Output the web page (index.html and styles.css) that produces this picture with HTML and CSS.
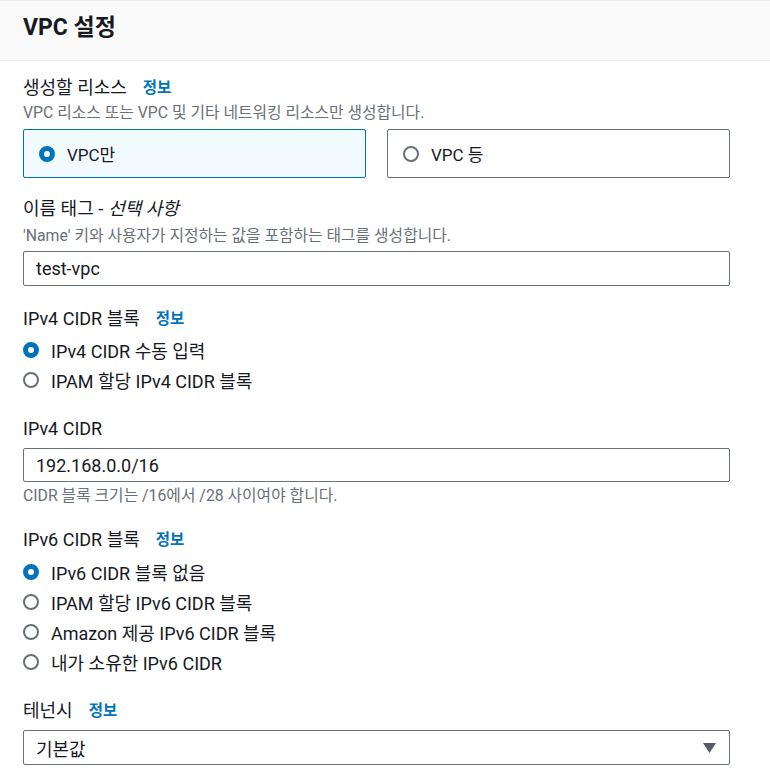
FILE: index.html
```html
<!DOCTYPE html>
<html lang="ko">
<head>
<meta charset="utf-8">
<title>VPC 설정</title>
<link rel="stylesheet" href="styles.css">
</head>
<body>
<section class="panel">
  <header class="panel-header">
    <h2 class="panel-title">VPC 설정</h2>
  </header>
  <div class="panel-body">
    <div class="field field-resources">
      <div class="label">생성할 리소스 <a class="info" href="#">정보</a></div>
      <div class="desc">VPC 리소스 또는 VPC 및 기타 네트워킹 리소스만 생성합니다.</div>
      <div class="tiles">
        <div class="tile tile-selected"><span class="radio radio-on"></span><span class="tile-text">VPC만</span></div>
        <div class="tile"><span class="radio"></span><span class="tile-text">VPC 등</span></div>
      </div>
    </div>

    <div class="field field-name">
      <div class="label">이름 태그 - <em>선택 사항</em></div>
      <div class="desc">'Name' 키와 사용자가 지정하는 값을 포함하는 태그를 생성합니다.</div>
      <div class="input">test-vpc</div>
    </div>

    <div class="field field-ipv4">
      <div class="label">IPv4 CIDR 블록 <a class="info" href="#">정보</a></div>
      <div class="radios">
        <div class="radio-row"><span class="radio radio-on"></span><span>IPv4 CIDR 수동 입력</span></div>
        <div class="radio-row"><span class="radio"></span><span>IPAM 할당 IPv4 CIDR 블록</span></div>
      </div>
    </div>

    <div class="field field-cidr">
      <div class="label">IPv4 CIDR</div>
      <div class="input">192.168.0.0/16</div>
      <div class="hint">CIDR 블록 크기는 /16에서 /28 사이여야 합니다.</div>
    </div>

    <div class="field field-ipv6">
      <div class="label">IPv6 CIDR 블록 <a class="info" href="#">정보</a></div>
      <div class="radios">
        <div class="radio-row"><span class="radio radio-on"></span><span>IPv6 CIDR 블록 없음</span></div>
        <div class="radio-row"><span class="radio"></span><span>IPAM 할당 IPv6 CIDR 블록</span></div>
        <div class="radio-row"><span class="radio"></span><span>Amazon 제공 IPv6 CIDR 블록</span></div>
        <div class="radio-row"><span class="radio"></span><span>내가 소유한 IPv6 CIDR</span></div>
      </div>
    </div>

    <div class="field field-tenancy">
      <div class="label">테넌시 <a class="info" href="#">정보</a></div>
      <div class="select">
        <span>기본값</span>
        <svg class="caret" width="13" height="10" viewBox="0 0 13 10"><path d="M0 0 H13 L6.5 10 Z" fill="#545b64"/></svg>
      </div>
    </div>
  </div>
</section>
</body>
</html>
```

FILE: styles.css
```css
* { box-sizing: border-box; }
html, body { margin: 0; padding: 0; background: #ffffff; }
body {
  font-family: Roboto, "Noto Sans CJK KR", sans-serif;
  color: #16191f;
  width: 770px;
  height: 783px;
  overflow: hidden;
}
.panel { width: 770px; }
.panel-header {
  background: #fafafa;
  border-top: 1px solid #eaeded;
  border-bottom: 1px solid #eaeded;
  height: 61px;
  padding: 0 23px;
  display: flex;
  align-items: center;
}
.panel-title {
  margin: 0;
  font-size: 23px;
  font-weight: 700;
  line-height: 30px;
  margin-top: -5px;
}
.panel-body {
  padding: 0 40px 0 23px;
}
.field { display: flex; flex-direction: column; }
.label {
  font-size: 18px;
  line-height: 24px;
  height: 24px;
  display: flex;
  align-items: center;
}
.label em { font-style: italic; margin-left: 5px; }
.info {
  color: #0073bb;
  font-size: 15.5px;
  font-weight: 700;
  text-decoration: none;
  margin-left: 16px;
}
.desc, .hint {
  font-size: 15.8px;
  line-height: 20px;
  height: 20px;
  color: #687078;
  white-space: nowrap;
}
.field-resources { margin-top: 15px; }
.field-resources .desc { margin-top: 3px; }
.tiles {
  display: grid;
  grid-template-columns: 1fr 1fr;
  gap: 21px;
  margin-top: 6px;
}
.tile {
  height: 49px;
  border: 1px solid #687078;
  border-radius: 2px;
  display: flex;
  align-items: center;
  padding-left: 15px;
  font-size: 17px;
}
.tile-selected {
  border-color: #0073bb;
  background: #f1faff;
}
.tile-text { margin-left: 12px; }
.radio {
  width: 16px;
  height: 16px;
  border-radius: 50%;
  border: 2px solid #687078;
  background: #fff;
  flex: none;
}
.radio-on {
  border: 5px solid #0073bb;
}
.field-name { margin-top: 19px; }
.field-name .desc { margin-top: 5px; }
.input, .select {
  height: 35px;
  border: 1px solid #687078;
  border-radius: 2px;
  padding: 0 12px;
  font-size: 18px;
  display: flex;
  align-items: center;
}
.field-name .input { margin-top: 5px; }
.field-ipv4 { margin-top: 21px; }
.radios { display: flex; flex-direction: column; }
.field-ipv4 .radios { margin-top: 3px; }
.radio-row {
  height: 30px;
  display: flex;
  align-items: center;
  font-size: 18px;
}
.field-ipv4 .radio-row:first-child { height: 31px; }
.radio-row .radio { margin-right: 12px; }
.field-cidr { margin-top: 22px; }
.field-cidr .input { margin-top: 7px; height: 34px; }
.field-cidr .hint { margin-top: 4px; }
.field-ipv6 { margin-top: 22px; }
.field-ipv6 .radios { margin-top: 5px; }
.field-tenancy { margin-top: 22px; }
.select {
  margin-top: 7px;
  justify-content: space-between;
}
.caret { margin-right: 1px; }
```
